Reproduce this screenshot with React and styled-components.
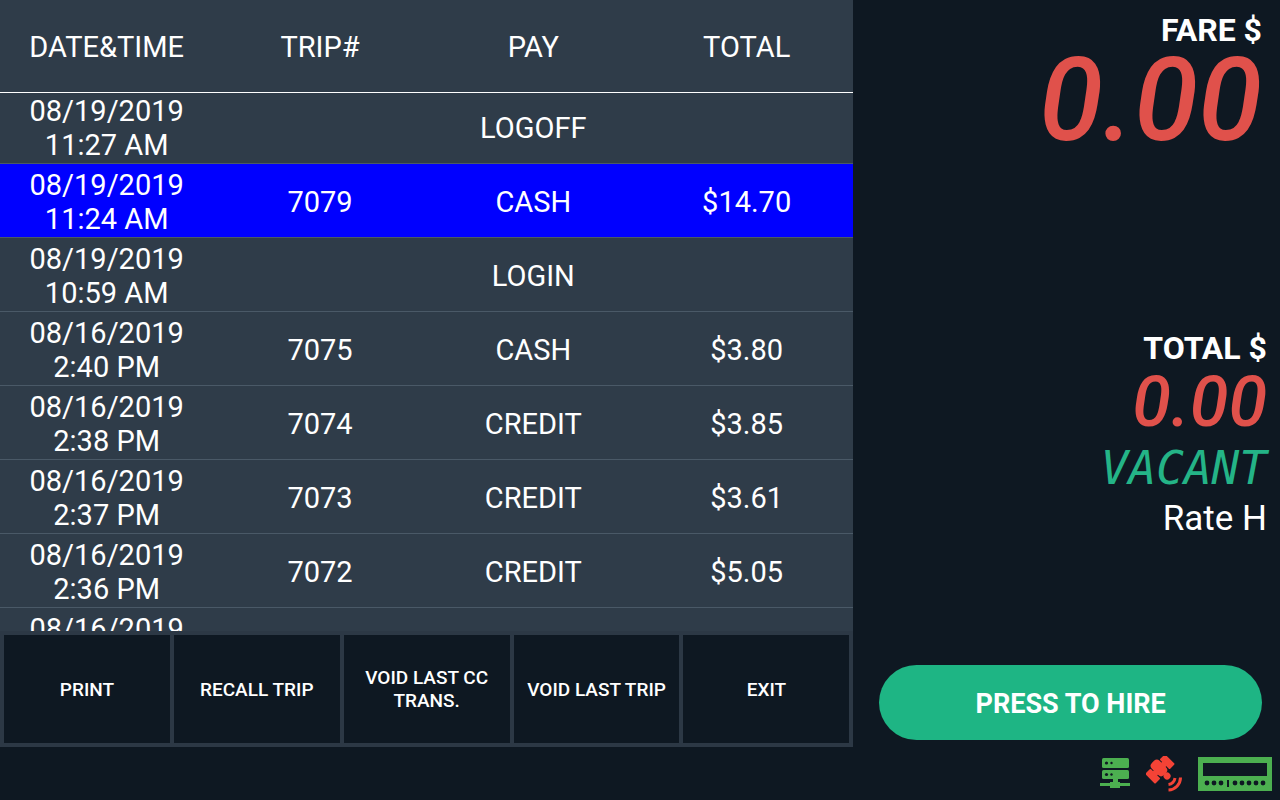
import React, { useLayoutEffect, useRef } from 'react'
import styled, { createGlobalStyle } from 'styled-components'

const GlobalStyle = createGlobalStyle`
    * {
        box-sizing: border-box;
    }

    body {
        margin: 0;
        background-color: #0e1822;
        color: white;
        font-family: Roboto, "Liberation Sans", sans-serif;
    }
`

const Screen = styled.div`
    height: 100vh;
    display: flex;
    flex-direction: column;
`

const Main = styled.main`
    flex: 1;
    min-height: 0;
    display: grid;
    grid-template-columns: 2fr 1fr;
`

const Panel = styled.section`
    min-height: 0;
    display: flex;
    flex-direction: column;
    background-color: #2f3c49;
`

const TripList = styled.div`
    flex: 1;
    min-height: 0;
    overflow: hidden;
`

const TripTable = styled.table`
    width: 100%;
    table-layout: fixed;
    border-spacing: 0;
    font-size: 29px;
    line-height: 34px;
    text-align: center;
`

const HeadCell = styled.th`
    position: sticky;
    top: 0;
    height: 93px;
    padding: 2px 0px 0px;
    font-weight: 400;
    background-color: #2f3c49;
    border-bottom: 1px solid white;
`

const TripRow = styled.tr`
    background-color: ${props => props.$selected ? "#0000ff" : "transparent"};
`

const Cell = styled.td`
    height: 74px;
    padding: 3px 0px 0px;
    border-bottom: 1px solid #4a5967;
`

const Line = styled.span`
    display: block;
    min-height: 34px;
`

const Actions = styled.div`
    display: grid;
    grid-template-columns: repeat(5, 1fr);
    gap: 4px;
    padding: 4px;
    background-color: #2c3845;
`

const ActionButton = styled.button`
    height: 108px;
    padding: 0px 10px;
    border: none;
    background-color: #0e1822;
    color: white;
    font-family: inherit;
    font-size: 19px;
    font-weight: 500;
    line-height: 23px;
    cursor: pointer;
`

const Meter = styled.section`
    display: flex;
    flex-direction: column;
    justify-content: space-between;
    padding: 12px 18px 7px 26px;
`

const Readout = styled.div`
    text-align: right;
`

const Totals = styled(Readout)`
    margin-top: 52px;
    margin-right: -5px;
`

const Label = styled.h2`
    margin: 0;
    font-size: 32px;
    font-weight: 700;
    line-height: 36px;
`

const Digits = styled.div`
    color: #e0514b;
    font-style: italic;
    font-weight: 500;
    font-size: ${props => props.$large ? "116px" : "70px"};
    line-height: ${props => props.$large ? "104px" : "72px"};
`

const State = styled.div`
    color: #24b487;
    font-family: "DejaVu Sans Mono", monospace;
    font-style: italic;
    font-size: 46px;
    line-height: 60px;
`

const Rate = styled.div`
    font-size: 35px;
    line-height: 42px;
`

const HireButton = styled.button`
    height: 75px;
    padding-top: 3px;
    border: none;
    border-radius: 38px;
    background-color: #1eb584;
    color: white;
    font-family: inherit;
    font-size: 27px;
    font-weight: 700;
    cursor: pointer;
`

const StatusBar = styled.footer`
    height: 53px;
    display: flex;
    align-items: center;
    justify-content: flex-end;
    gap: 16px;
    padding: 0px 8px;
`

const trips = [
  { date: "08/19/2019", time: "11:27 AM", pay: "LOGOFF" },
  { date: "08/19/2019", time: "11:24 AM", trip: "7079", pay: "CASH", total: "$14.70" },
  { date: "08/19/2019", time: "10:59 AM", pay: "LOGIN" },
  { date: "08/16/2019", time: "2:40 PM", trip: "7075", pay: "CASH", total: "$3.80" },
  { date: "08/16/2019", time: "2:38 PM", trip: "7074", pay: "CREDIT", total: "$3.85" },
  { date: "08/16/2019", time: "2:37 PM", trip: "7073", pay: "CREDIT", total: "$3.61" },
  { date: "08/16/2019", time: "2:36 PM", trip: "7072", pay: "CREDIT", total: "$5.05" },
  { date: "08/16/2019" },
]

const actions = ["PRINT", "RECALL TRIP", "VOID LAST CC TRANS.", "VOID LAST TRIP", "EXIT"]

const ServerIcon = () => (
  <svg width="30" height="32" viewBox="0 0 30 32" fill="#4caf50" aria-hidden="true">
    <rect x="2" y="0" width="27" height="10" rx="1.5" />
    <rect x="2" y="12" width="27" height="9" rx="1.5" />
    <path d="M13 21h5v3h2v1h10v3H20v2H10v-2H0v-3h10v-1h3z" />
    <g fill="#0e1822">
      <circle cx="6.5" cy="5" r="1.6" />
      <circle cx="11.5" cy="5" r="1.2" />
      <circle cx="6.5" cy="16.5" r="1.6" />
      <circle cx="11.5" cy="16.5" r="1.2" />
    </g>
  </svg>
)

const SatelliteIcon = () => (
  <svg width="36" height="36" viewBox="0 0 36 36" fill="#f44336" aria-hidden="true">
    <g transform="rotate(-45 14 13)">
      <rect x="8.5" y="3" width="11" height="17" rx="4" />
      <rect x="0" y="6" width="7.5" height="14" rx="1" />
      <rect x="20.5" y="6" width="7.5" height="14" rx="1" />
      <rect x="6" y="9.5" width="16" height="6" />
      <circle cx="14" cy="23" r="3.5" />
    </g>
    <g fill="none" stroke="#f44336" strokeWidth="3">
      <path d="M22.5 28.5A7.5 7.5 0 0 0 29 22" />
      <path d="M22.5 34A12.5 12.5 0 0 0 34.5 21.5" />
    </g>
  </svg>
)

const TaximeterIcon = () => (
  <svg width="74" height="34" viewBox="0 0 74 34" fill="#4caf50" aria-hidden="true">
    <path fillRule="evenodd" d="M0 0h74v34H0zM5 6h64v13H5z" />
    <g fill="#0e1822">
      {[9, 16, 23, 37, 44, 51, 58, 65].map(x => (
        <circle key={x} cx={x} cy="26" r="2.4" />
      ))}
      <rect x="29" y="23" width="2" height="7" />
    </g>
  </svg>
)

const App = () => {
  const list = useRef(null)

  useLayoutEffect(() => {
    list.current.scrollTop = 3
  }, [])

  return (
    <Screen>
        <GlobalStyle />
        <Main>
            <Panel>
                <TripList ref={list}>
                    <TripTable>
                        <thead>
                            <tr>
                                <HeadCell>DATE&amp;TIME</HeadCell>
                                <HeadCell>TRIP#</HeadCell>
                                <HeadCell>PAY</HeadCell>
                                <HeadCell>TOTAL</HeadCell>
                            </tr>
                        </thead>
                        <tbody>
                            {trips.map((item, index) => (
                                <TripRow key={index} $selected={index === 1}>
                                    <Cell>
                                        <Line>{item.date}</Line>
                                        <Line>{item.time}</Line>
                                    </Cell>
                                    <Cell>{item.trip}</Cell>
                                    <Cell>{item.pay}</Cell>
                                    <Cell>{item.total}</Cell>
                                </TripRow>
                            ))}
                        </tbody>
                    </TripTable>
                </TripList>
                <Actions>
                    {actions.map(action => (
                        <ActionButton key={action} type="button">{action}</ActionButton>
                    ))}
                </Actions>
            </Panel>
            <Meter>
                <Readout>
                    <Label>FARE $</Label>
                    <Digits $large>0.00</Digits>
                </Readout>
                <Totals>
                    <Label>TOTAL $</Label>
                    <Digits>0.00</Digits>
                    <State>VACANT</State>
                    <Rate>Rate H</Rate>
                </Totals>
                <HireButton type="button">PRESS TO HIRE</HireButton>
            </Meter>
        </Main>
        <StatusBar>
            <ServerIcon />
            <SatelliteIcon />
            <TaximeterIcon />
        </StatusBar>
    </Screen>
  )
}

export default App
